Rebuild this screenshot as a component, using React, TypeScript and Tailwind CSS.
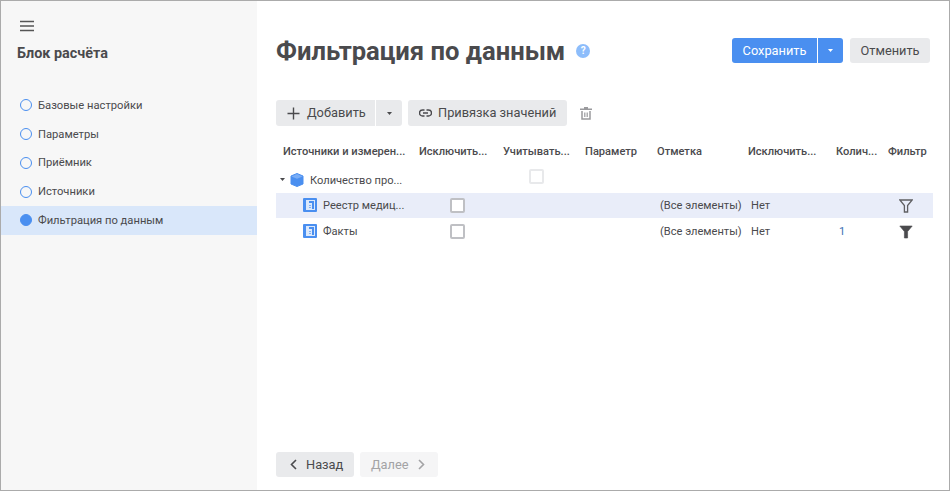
const font = { fontFamily: "Roboto, sans-serif" };

const steps = ["Базовые настройки", "Параметры", "Приёмник", "Источники", "Фильтрация по данным"];

const headers = ["Источники и измерен...", "Исключить...", "Учитывать...", "Параметр", "Отметка", "Исключить...", "Колич...", "Фильтр"];

const columns = "grid grid-cols-[136px_84px_82px_72px_91px_88px_52px_52px]";

function Caret({ className }: { className: string }) {
  return (
    <svg width="5" height="3" viewBox="0 0 5 3" className={className}>
      <path d="M0 0h5L2.5 3z" fill="currentColor" />
    </svg>
  );
}

function TableIcon() {
  return (
    <svg width="14" height="14" viewBox="0 0 14 14" className="shrink-0">
      <rect width="14" height="14" rx="1" fill="#4a8ff0" />
      <rect x="3" y="2" width="9" height="10" fill="#dce9fb" />
      <rect x="6" y="3" width="5" height="2" fill="#4a8ff0" />
      <rect x="9" y="5" width="2" height="6" fill="#4a8ff0" />
      <rect x="6" y="7" width="2" height="1" fill="#7fb0f5" />
      <rect x="6" y="9" width="2" height="1" fill="#7fb0f5" />
    </svg>
  );
}

function Cube() {
  return (
    <svg width="14" height="14" viewBox="0 0 14 14" className="shrink-0">
      <path
        d="M7 0.5L13 3v8L7 13.5 1 11V3z"
        fill="#4a8ff0"
        stroke="#4a8ff0"
        strokeWidth="1"
        strokeLinejoin="round"
      />
      <path d="M7 1l5.6 2.4L7 5.8 1.4 3.4z" fill="#79adf6" />
    </svg>
  );
}

function Checkbox({ muted }: { muted?: boolean }) {
  return (
    <div
      className={`w-[15px] h-[15px] rounded-[2px] border-2 bg-white ${muted ? "border-[#e8e9eb]" : "border-[#bfc0c4]"}`}
    />
  );
}

function Funnel({ filled }: { filled?: boolean }) {
  return (
    <svg width="14" height="14" viewBox="0 0 14 14">
      <path
        d="M0.8 1h12.4L8.6 6.6V13H5.4V6.6z"
        fill={filled ? "#4a4a4d" : "none"}
        stroke={filled ? "#4a4a4d" : "#5f5f62"}
        strokeWidth={filled ? 0.6 : 1.3}
      />
    </svg>
  );
}

function DataRow({ name, count, filled, active }: { name: string; count?: string; filled?: boolean; active?: boolean }) {
  return (
    <div className={`${columns} h-[25px] mb-px items-center text-[11.1px] ${active ? "bg-[#e9edf9]" : ""}`}>
      <div className="flex items-center pl-[27px] gap-[6px]">
        <TableIcon />
        <span className="pt-[2px]">{name}</span>
      </div>
      <div className="flex justify-center pl-[7px]">
        <Checkbox />
      </div>
      <div />
      <div />
      <div className="pl-[10px] pt-[2px] whitespace-nowrap">(Все элементы)</div>
      <div className="pl-[10px] pt-[2px]">Нет</div>
      <div className="pl-[10px] pt-[2px] text-[#3a6fb5]">{count}</div>
      <div className="flex justify-center pr-[2px]">
        <Funnel filled={filled} />
      </div>
    </div>
  );
}

export default function App() {
  return (
    <div
      style={font}
      className="w-[950px] h-[491px] flex border border-[#ababab] bg-white text-[#4a4a4d] overflow-hidden"
    >
      <aside className="w-[256px] shrink-0 bg-[#f7f7f7] flex flex-col pt-[19px]">
        <div className="pl-[19px] h-[14px]">
          <svg width="14" height="12" viewBox="0 0 14 12">
            <path d="M0 1.5h14M0 6h14M0 10.5h14" stroke="#555" strokeWidth="1.4" />
          </svg>
        </div>
        <h2 className="pl-[16px] mt-[9px] text-[14.4px] leading-[22px] font-bold">Блок расчёта</h2>
        <nav className="mt-[26px] flex flex-col">
          {steps.map((step, i) => {
            const active = i === steps.length - 1;
            return (
              <div
                key={step}
                className={`h-[28.75px] flex items-center pl-[19px] gap-[6px] text-[11.2px] ${active ? "bg-[#d9e7fa]" : ""}`}
              >
                <span
                  className={`w-[12px] h-[12px] rounded-full border border-[#4a8ff0] ${active ? "bg-[#4a8ff0]" : ""}`}
                />
                <span className="pt-[2px]">{step}</span>
              </div>
            );
          })}
        </nav>
      </aside>

      <main className="flex-1 flex flex-col pl-[19px] pr-[16px]">
        <header className="flex items-center justify-between h-[99px] pr-[3px]">
          <div className="flex items-center gap-[11px]">
            <h1 className="text-[25.6px] font-bold leading-[30px]">Фильтрация по данным</h1>
            <span className="w-[14px] h-[14px] rounded-full bg-[#8dbdfb] text-white text-[10px] font-bold flex items-center justify-center">
              ?
            </span>
          </div>
          <div className="flex items-center gap-[7px] text-[12.8px]">
            <div className="flex h-[25px] rounded-[3px] overflow-hidden text-white">
              <button className="w-[85px] bg-[#4a8ff0]">Сохранить</button>
              <button className="w-[25px] ml-px bg-[#4a8ff0] flex items-center justify-center">
                <Caret className="text-white" />
              </button>
            </div>
            <button className="w-[80px] h-[25px] rounded-[3px] bg-[#e9eaec]">Отменить</button>
          </div>
        </header>

        <div className="flex items-center h-[26px] text-[12.8px]">
          <div className="flex h-[26px] rounded-[3px] overflow-hidden">
            <button className="w-[99px] bg-[#e9eaec] flex items-center pl-[11px] gap-[7px]">
              <svg width="13" height="13" viewBox="0 0 13 13">
                <path d="M6.5 0.5v12M0.5 6.5h12" stroke="#4a4a4d" strokeWidth="1.4" />
              </svg>
              <span>Добавить</span>
            </button>
            <button className="w-[26px] ml-px bg-[#e9eaec] flex items-center justify-center">
              <Caret className="text-[#4a4a4d]" />
            </button>
          </div>
          <button className="w-[159px] h-[26px] ml-[6px] rounded-[3px] bg-[#e9eaec] flex items-center pl-[11px] gap-[6px]">
            <svg width="13" height="8" viewBox="0 0 13 8">
              <path
                d="M5.5 1H3.5a3 3 0 0 0 0 6h2M7.5 1h2a3 3 0 0 1 0 6h-2M4 4h5"
                fill="none"
                stroke="#4a4a4d"
                strokeWidth="1.4"
              />
            </svg>
            <span>Привязка значений</span>
          </button>
          <svg width="12" height="13" viewBox="0 0 12 13" className="ml-[13px]">
            <path d="M4 0h4v1.5h4V3H0V1.5h4z" fill="#9a9a9d" />
            <path d="M2 4v8h8V4" fill="none" stroke="#9a9a9d" strokeWidth="1.5" />
            <path d="M4.8 5.5v4.5M7.2 5.5v4.5" stroke="#9a9a9d" strokeWidth="1.2" />
          </svg>
        </div>

        <div className="mt-[13px] text-[11.1px]">
          <div className={`${columns} h-[26px] items-center font-medium`}>
            {headers.map((title, i) => (
              <div key={i} className="whitespace-nowrap pl-[7px]">
                {title}
              </div>
            ))}
          </div>
          <div className={`${columns} h-[28px] items-center`}>
            <div className="flex items-center pl-[4px] gap-[5px] whitespace-nowrap pt-[2px]">
              <Caret className="text-[#4a4a4d]" />
              <Cube />
              <span className="ml-[1px] pt-[3px]">Количество про...</span>
            </div>
            <div />
            <div className="flex justify-center -mt-[5px] pr-[2px]">
              <Checkbox muted />
            </div>
          </div>
          <DataRow name="Реестр медиц..." active />
          <DataRow name="Факты" count="1" filled />
        </div>

        <footer className="mt-auto mb-[13px] flex gap-[6px] text-[12.8px]">
          <button className="w-[78px] h-[25px] rounded-[3px] bg-[#e9eaec] flex items-center pl-[14px] gap-[9px]">
            <svg width="7" height="11" viewBox="0 0 7 11">
              <path d="M6 1L1.5 5.5 6 10" fill="none" stroke="#4a4a4d" strokeWidth="1.6" />
            </svg>
            <span>Назад</span>
          </button>
          <button className="w-[78px] h-[25px] rounded-[3px] bg-[#f5f5f6] flex items-center pl-[11px] gap-[9px] text-[#a3a3a5]">
            <span>Далее</span>
            <svg width="7" height="11" viewBox="0 0 7 11">
              <path d="M1 1l4.5 4.5L1 10" fill="none" stroke="#a3a3a5" strokeWidth="1.6" />
            </svg>
          </button>
        </footer>
      </main>
    </div>
  );
}
